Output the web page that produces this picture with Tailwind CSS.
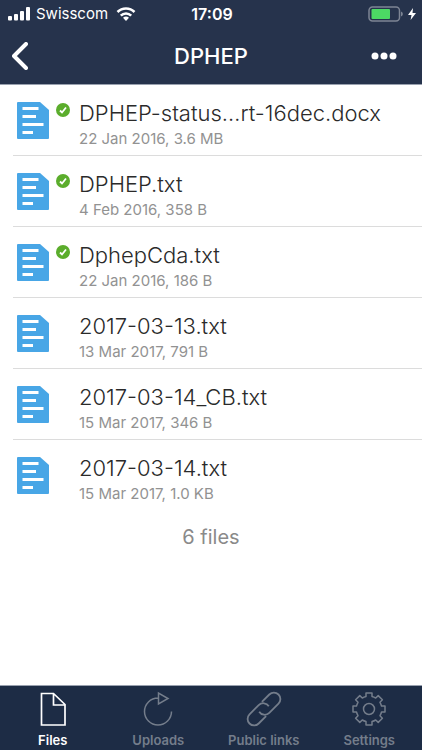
<!DOCTYPE html>
<html lang="en">
<head>
  <meta charset="UTF-8" />
  <meta name="viewport" content="width=device-width, initial-scale=1.0" />
  <title>DPHEP</title>
  <script src="https://cdn.jsdelivr.net/npm/@tailwindcss/browser@4"></script>
</head>
<body class="min-h-screen flex flex-col bg-white font-['Inter','Liberation_Sans',sans-serif]">
  <header class="bg-[#26334c] text-white border-b border-gray-400">
    <!-- Status bar -->
    <div class="grid grid-cols-3 items-center h-7 pl-2 pr-1.5 text-[15px]">
      <div class="flex items-center gap-1">
        <svg class="w-6 h-4 shrink-0" viewBox="0 0 24 16" fill="currentColor">
          <rect x="0" y="10" width="4" height="4.5" rx="1" />
          <rect x="6" y="8" width="4" height="6.5" rx="1" />
          <rect x="12" y="5" width="4" height="9.5" rx="1" />
          <rect x="18" y="1" width="4" height="13.5" rx="1" />
        </svg>
        <span>Swisscom</span>
        <svg class="w-5 h-4 ml-1 shrink-0" viewBox="0 0 20 16" fill="none" stroke="currentColor" stroke-width="2.6">
          <path d="M1.5 6a12 12 0 0 1 17 0" />
          <path d="M4.8 9.6a7.4 7.4 0 0 1 10.4 0" />
          <path d="M10 15l-3-3.2a4.4 4.4 0 0 1 6 0z" fill="currentColor" stroke="none" />
        </svg>
      </div>
      <div class="text-center text-base font-semibold">17:09</div>
      <div class="flex items-center justify-end gap-1">
        <svg class="w-9 h-4" viewBox="0 0 36 16">
          <rect x="1" y="1" width="30.5" height="14" rx="3.5" fill="none" stroke="#7d8594" stroke-width="1.5" />
          <rect x="3.5" y="3" width="18.5" height="10" rx="1" fill="#4cd964" />
          <path d="M33 5.5a2.6 2.6 0 0 1 0 5z" fill="#7d8594" />
        </svg>
        <svg class="w-2 h-3" viewBox="0 0 8 12" fill="currentColor"><path d="M5 0L0 7h3.5L2.600 12 8 5H4.500z" /></svg>
      </div>
    </div>
    <!-- Title bar -->
    <div class="grid grid-cols-3 items-center h-14 pl-3 pr-6">
      <button class="justify-self-start" aria-label="Back">
        <svg class="w-4 h-7" viewBox="0 0 16 28" fill="none" stroke="currentColor" stroke-width="4" stroke-linecap="round" stroke-linejoin="round"><path d="M14 2L2 14l12 12" /></svg>
      </button>
      <h1 class="pl-3 text-center text-[22px] font-medium">DPHEP</h1>
      <button class="justify-self-end" aria-label="More">
        <svg class="w-7 h-2" viewBox="0 0 28 8" fill="currentColor"><circle cx="5" cy="4" r="3.5" /><circle cx="14" cy="4" r="3.5" /><circle cx="23" cy="4" r="3.5" /></svg>
      </button>
    </div>
  </header>

  <main class="flex-1">
    <ul id="file-list" class="pl-[13px] divide-y divide-[#dcdcdc]"></ul>
    <p class="mt-3 text-center text-xl text-[#8a8a8a]">6 files</p>
  </main>

  <nav class="grid grid-cols-4 h-[65px] bg-[#1d2c45] border-t border-gray-400 text-[#747d8b] text-[13px] font-semibold">
    <a href="#files" class="flex flex-col items-center gap-1 pt-[5px] text-white">
      <svg class="w-9 h-9" viewBox="0 0 36 36" fill="none" stroke="currentColor" stroke-width="1.7"><path d="M6.500 2.500h12l11.500 11v20.500H6.500zM18.500 2.500v11.500H30" /></svg>
      Files
    </a>
    <a href="#uploads" class="flex flex-col items-center gap-1 pt-[5px]">
      <svg class="w-9 h-9" viewBox="0 0 36 36" fill="none" stroke="currentColor" stroke-width="1.5"><path d="M31.500 20.500a13.500 13.500 0 1 1-13.500-13.500M18.500 2v11l9.500-5.500z" /></svg>
      Uploads
    </a>
    <a href="#links" class="flex flex-col items-center gap-1 pt-[5px]">
      <svg class="w-9 h-9" viewBox="0 0 36 36" fill="none" stroke="currentColor" stroke-width="1.8">
        <g transform="rotate(-45 18 18)">
          <path d="M21.500 11.500H32a6.500 6.500 0 0 1 0 13H19a6.500 6.500 0 0 1-6.300-8" />
          <path d="M14.500 24.500H4a6.500 6.500 0 0 1 0-13h13a6.500 6.500 0 0 1 6.300 8" />
        </g>
      </svg>
      Public links
    </a>
    <a href="#settings" class="flex flex-col items-center gap-1 pt-[5px]">
      <svg class="w-9 h-9" viewBox="-1 -1 36 36" fill="none" stroke="currentColor" stroke-width="1.5" stroke-linejoin="round">
        <path d="M14 4.500V1h6v3.500A13 13 0 0 1 23.700 6l2.500-2.400 4.200 4.200-2.400 2.500A13 13 0 0 1 29.500 14H33v6h-3.500A13 13 0 0 1 28 23.700l2.400 2.500-4.200 4.200-2.500-2.400A13 13 0 0 1 20 29.500V33h-6v-3.500A13 13 0 0 1 10.300 28l-2.500 2.400-4.200-4.200L6 23.700A13 13 0 0 1 4.500 20H1v-6h3.500A13 13 0 0 1 6 10.300L3.600 7.800l4.200-4.200L10.300 6A13 13 0 0 1 14 4.500z" />
        <circle cx="17" cy="17" r="5.5" />
      </svg>
      Settings
    </a>
  </nav>

  <script>
    const files = [
      { name: 'DPHEP-status…rt-16dec.docx', info: '22 Jan 2016, 3.6 MB', synced: true },
      { name: 'DPHEP.txt', info: '4 Feb 2016, 358 B', synced: true },
      { name: 'DphepCda.txt', info: '22 Jan 2016, 186 B', synced: true },
      { name: '2017-03-13.txt', info: '13 Mar 2017, 791 B' },
      { name: '2017-03-14_CB.txt', info: '15 Mar 2017, 346 B' },
      { name: '2017-03-14.txt', info: '15 Mar 2017, 1.0 KB' }
    ];

    const check = `
      <svg class="w-[14px] h-[14px]" viewBox="0 0 14 14">
        <circle cx="7" cy="7" r="7" fill="#5bad2c" />
        <path d="M4 7.500l2 2 4-5" fill="none" stroke="#fff" stroke-width="1.8" />
      </svg>`;

    document.getElementById('file-list').innerHTML = files.map(f => `
      <li class="flex h-[71px] pt-4 pl-1">
        <svg class="w-8 h-[37px] mt-px shrink-0" viewBox="0 0 32 37">
          <path d="M1 0h22l9 8v28a1 1 0 0 1-1 1H1a1 1 0 0 1-1-1V1a1 1 0 0 1 1-1z" fill="#48a6e6" />
          <path d="M5.500 6.500h16M5.500 14.500H19M5.500 22.500h21M5.500 30.500H16" stroke="#fff" stroke-width="3" />
        </svg>
        <div class="w-[30px] pl-[7px] pt-[2px] shrink-0">${f.synced ? check : ''}</div>
        <div class="min-w-0">
          <div class="text-[22px] leading-6 font-light text-[#2a2a2a] truncate">${f.name}</div>
          <div class="mt-1 text-[15px] leading-5 text-[#929292]">${f.info}</div>
        </div>
      </li>
    `).join('');
  </script>
</body>
</html>
